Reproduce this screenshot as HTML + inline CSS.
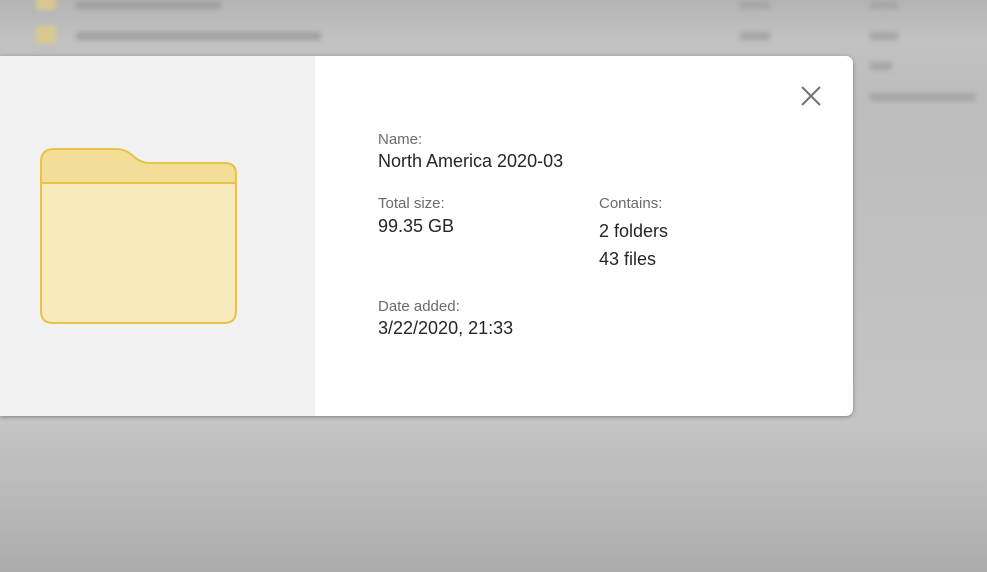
<!DOCTYPE html>
<html><head><meta charset="utf-8"><style>
html,body{margin:0;padding:0;}
body{width:987px;height:572px;overflow:hidden;position:relative;font-family:"Liberation Sans",sans-serif;
background:linear-gradient(180deg,#b4b4b4 0px,#c2c2c2 40px,#bdbdbd 100px,#c4c4c4 420px,#bcbcbc 480px,#acacac 572px);}
.blur{position:absolute;filter:blur(2.5px);}
.modal{position:absolute;left:0;top:56px;width:853px;height:360px;background:#fff;border-radius:0 7px 7px 0;box-shadow:0 1px 4px rgba(0,0,0,.35);overflow:hidden;}
.left{position:absolute;left:0;top:0;width:315px;height:360px;background:#f2f2f2;}
.lab{position:absolute;font-size:15px;color:#6b6b6b;}
.val{position:absolute;font-size:18px;color:#262626;}
</style></head><body>
<div class="blur" style="left:36px;top:-4px;width:20px;height:14px;background:#d8c890;border-radius:2px"></div>
<div class="blur" style="left:76px;top:1px;width:145px;height:8px;background:#a0a0a0;border-radius:3px"></div>
<div class="blur" style="left:740px;top:1px;width:30px;height:8px;background:#a6a6a6"></div>
<div class="blur" style="left:870px;top:1px;width:28px;height:8px;background:#a6a6a6"></div>
<div class="blur" style="left:36px;top:26px;width:20px;height:18px;background:#d8c890;border-radius:2px"></div>
<div class="blur" style="left:76px;top:32px;width:245px;height:8px;background:#a0a0a0;border-radius:3px"></div>
<div class="blur" style="left:740px;top:32px;width:30px;height:8px;background:#a6a6a6"></div>
<div class="blur" style="left:870px;top:32px;width:28px;height:8px;background:#a6a6a6"></div>
<div class="blur" style="left:870px;top:62px;width:22px;height:8px;background:#a6a6a6"></div>
<div class="blur" style="left:870px;top:93px;width:105px;height:8px;background:#a6a6a6"></div>
<div class="modal">
<div class="left">
<svg width="315" height="360" style="position:absolute;left:0;top:0">
<path d="M41,127 L41,106 Q41,93 54,93 L116,93 Q125,93 132,99 Q140,107 150,107 L225,107 Q236,107 236,118 L236,127 Z" fill="#f3de98" stroke="#e9c24a" stroke-width="2"/>
<path d="M41,127 L236,127 L236,255 Q236,267 224,267 L53,267 Q41,267 41,255 Z" fill="#f8eabb" stroke="#e9c24a" stroke-width="2"/>
</svg>
</div>
<div class="lab" style="left:378px;top:75px">Name:</div>
<div class="val" style="left:378px;top:95px">North America 2020-03</div>
<div class="lab" style="left:378px;top:139px">Total size:</div>
<div class="val" style="left:378px;top:160px">99.35 GB</div>
<div class="lab" style="left:599px;top:139px">Contains:</div>
<div class="val" style="left:599px;top:165px">2 folders</div>
<div class="val" style="left:599px;top:193px">43 files</div>
<div class="lab" style="left:378px;top:242px">Date added:</div>
<div class="val" style="left:378px;top:262px">3/22/2020, 21:33</div>
<svg width="22" height="22" style="position:absolute;left:800px;top:29px"><path d="M2,2 L20,20 M20,2 L2,20" stroke="#777" stroke-width="2.2"/></svg>
</div>
</body></html>
